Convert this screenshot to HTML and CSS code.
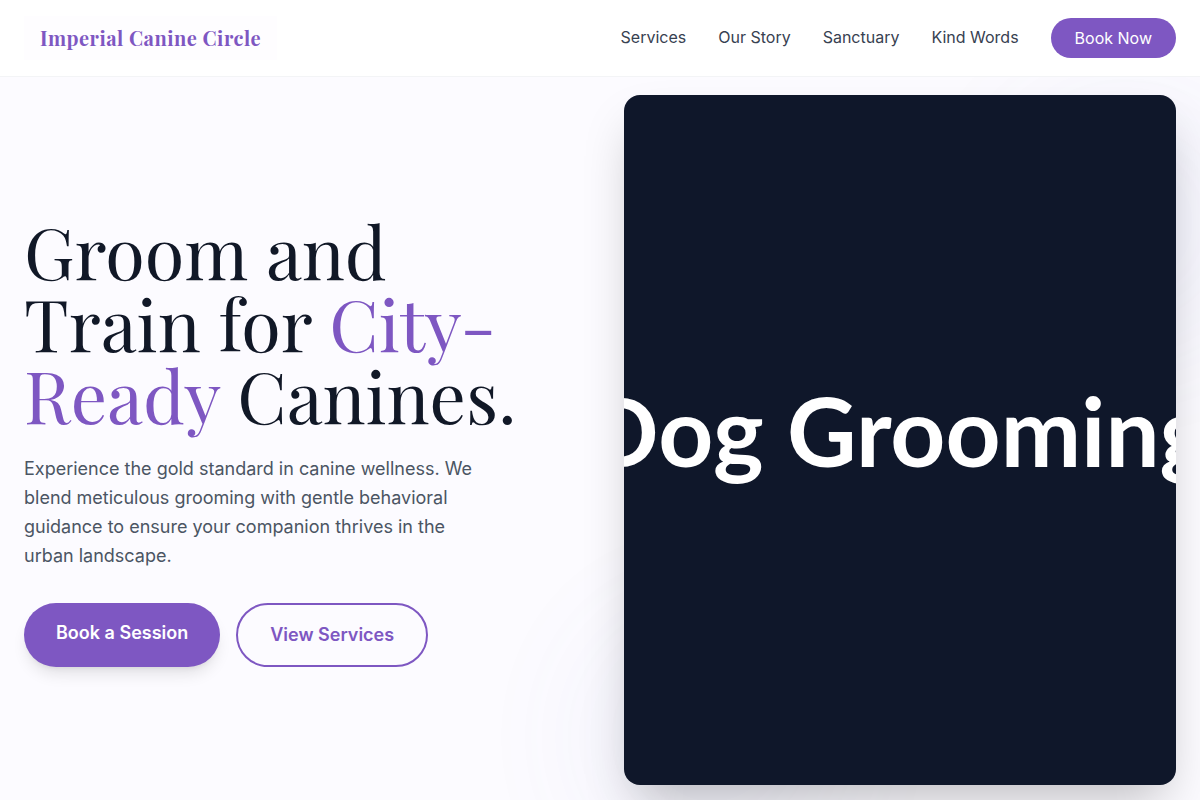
FILE: index.html
```html
<!DOCTYPE html>
<html lang="en">
<head>
    <meta charset="UTF-8">
    <meta name="viewport" content="width=device-width, initial-scale=1.0">
    <title>Imperial Canine Circle</title>
    <link rel="stylesheet" href="styles.css">
</head>
<body>
    <header class="header">
        <a href="#" class="logo">Imperial Canine Circle</a>
        <nav class="nav">
            <a href="#services">Services</a>
            <a href="#story">Our Story</a>
            <a href="#sanctuary">Sanctuary</a>
            <a href="#words">Kind Words</a>
            <a href="#book" class="nav-btn">Book Now</a>
        </nav>
    </header>

    <main class="hero">
        <div class="hero-inner">
            <div class="hero-text">
                <h1>Groom and Train for <span class="accent">City-Ready</span> Canines.</h1>
                <p>Experience the gold standard in canine wellness. We blend meticulous grooming with gentle behavioral guidance to ensure your companion thrives in the urban landscape.</p>
                <div class="actions">
                    <a href="#book" class="btn btn-primary">Book a Session</a>
                    <a href="#services" class="btn btn-outline">View Services</a>
                </div>
            </div>
            <div class="hero-media">
                <div class="hero-card">
                    <span>Dog Grooming</span>
                </div>
            </div>
        </div>
    </main>
</body>
</html>
```

FILE: styles.css
```css
* {
    box-sizing: border-box;
}
body {
    margin: 0;
    font-family: Inter, "Liberation Sans", sans-serif;
    font-size: 16px;
    line-height: 24px;
    color: #0f172a;
    background-color: #fcfbff;
}
a {
    text-decoration: none;
}
/* Header */
.header {
    position: fixed;
    top: 0;
    left: 0;
    right: 0;
    z-index: 10;
    display: flex;
    align-items: center;
    justify-content: space-between;
    padding: 16px 24px;
    background-color: #fff;
    border-bottom: 1px solid #f3f4f6;
}
.logo {
    padding: 8px 16px;
    font-family: "Playfair Display", "Liberation Serif", serif;
    font-size: 20px;
    font-weight: 700;
    line-height: 28px;
    letter-spacing: 0.5px;
    color: #7e57c2;
    background-color: #fefdff;
}
.nav {
    display: flex;
    align-items: center;
    gap: 32px;
}
.nav a {
    padding-bottom: 2px;
    color: #374151;
}
.nav .nav-btn {
    padding: 8px 24px;
    border-radius: 20px;
    color: #fff;
    background-color: #7e57c2;
}
/* Hero */
.hero {
    display: flex;
    align-items: center;
    min-height: 100vh;
    padding-top: 80px;
    overflow: hidden;
}
.hero-inner {
    display: grid;
    grid-template-columns: minmax(0, 1fr) minmax(0, 1fr);
    align-items: center;
    gap: 48px;
    width: 100%;
    max-width: 1280px;
    margin: 0 auto;
    padding: 0 24px;
}
.hero-text h1 {
    margin: 0 0 24px;
    font-family: "Playfair Display", "Liberation Serif", serif;
    font-size: 72px;
    font-weight: 400;
    line-height: 72px;
    color: #111827;
}
.accent {
    color: #7e57c2;
}
.hero-text p {
    max-width: 450px;
    margin: 0 0 33px;
    font-size: 18px;
    line-height: 29px;
    color: #4b5563;
}
.actions {
    display: flex;
    gap: 16px;
}
.btn {
    padding: 16px 32px;
    border-radius: 32px;
    font-size: 18px;
    font-weight: 600;
    line-height: 28px;
}
.btn-primary {
    color: #fff;
    background-color: #7e57c2;
    box-shadow: 0 10px 15px -3px rgba(0, 0, 0, 0.1), 0 4px 6px -4px rgba(0, 0, 0, 0.1);
}
.btn-outline {
    border: 2px solid #7e57c2;
    color: #7e57c2;
}
.hero-media {
    position: relative;
}
/* soft glows behind the card */
.hero-media::before,
.hero-media::after {
    content: "";
    position: absolute;
    width: 256px;
    height: 256px;
    border-radius: 50%;
    background-color: #5c6bc0;
    opacity: 0.06;
    filter: blur(64px);
}
.hero-media::before {
    top: 0;
    right: -80px;
}
.hero-media::after {
    bottom: -80px;
    left: -40px;
}
.hero-card {
    position: relative;
    z-index: 1;
    display: flex;
    align-items: center;
    justify-content: center;
    aspect-ratio: 4 / 5;
    padding: 0 4px 20px 0;
    border-radius: 16px;
    overflow: hidden;
    background-color: #0f172a;
    box-shadow: 0 25px 50px -12px rgba(0, 0, 0, 0.25);
}
.hero-card span {
    font-family: Lato, sans-serif;
    font-size: 96px;
    font-weight: 700;
    line-height: 120px;
    color: #fff;
    white-space: nowrap;
}
```
